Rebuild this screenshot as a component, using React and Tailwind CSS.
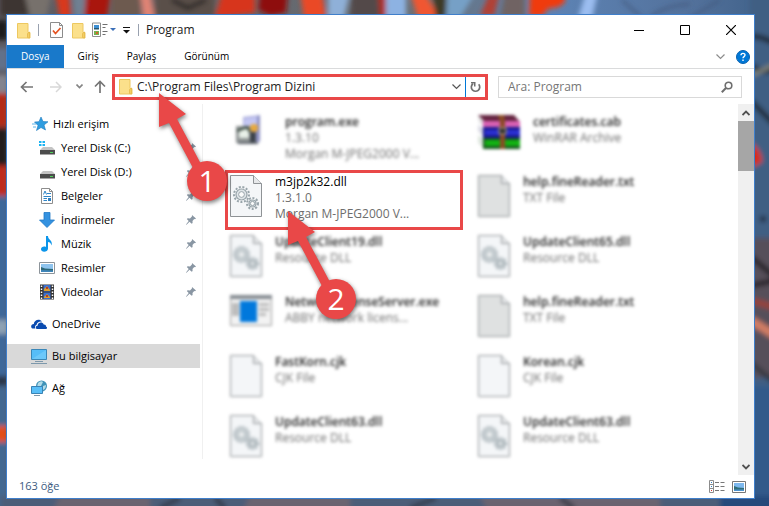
import { useState } from 'react';

const FILES = [
    { name: 'program.exe', info: ['1.3.10', 'Morgan M-JPEG2000 V...'], icon: 'installer' },
    { name: 'certificates.cab', info: ['WinRAR Archive'], icon: 'archive' },
    { name: 'm3jp2k32.dll', info: ['1.3.1.0', 'Morgan M-JPEG2000 V...'], icon: 'dll', marked: true },
    { name: 'help.fineReader.txt', info: ['TXT File'], icon: 'text' },
    { name: 'UpdateClient19.dll', info: ['Resource DLL'], icon: 'dll' },
    { name: 'UpdateClient65.dll', info: ['Resource DLL'], icon: 'dll' },
    { name: 'NetworkLicenseServer.exe', info: ['ABBY network licens...'], icon: 'app' },
    { name: 'help.fineReader.txt', info: ['TXT File'], icon: 'text' },
    { name: 'FastKorn.cjk', info: ['CJK File'], icon: 'blank' },
    { name: 'Korean.cjk', info: ['CJK File'], icon: 'blank' },
    { name: 'UpdateClient63.dll', info: ['Resource DLL'], icon: 'dll' },
    { name: 'UpdateClient63.dll', info: ['Resource DLL'], icon: 'dll' },
];

const QUICK_ACCESS = [
    { name: 'Yerel Disk (C:)', icon: 'driveC' },
    { name: 'Yerel Disk (D:)', icon: 'drive' },
    { name: 'Belgeler', icon: 'documents' },
    { name: 'İndirmeler', icon: 'downloads' },
    { name: 'Müzik', icon: 'music' },
    { name: 'Resimler', icon: 'pictures' },
    { name: 'Videolar', icon: 'videos' },
];

/* ---------- Wallpaper ---------- */

function Wallpaper() {
    return (
        <svg className="absolute inset-0 h-full w-full" viewBox="0 0 769 506" preserveAspectRatio="none" aria-hidden="true">
            <defs>
                <filter id="soft" x="-5%" y="-5%" width="110%" height="110%"><feGaussianBlur stdDeviation="2.4" /></filter>
                <linearGradient id="sky" x1="0" y1="0" x2="1" y2="0">
                    <stop offset="0" stopColor="#5c5a60" />
                    <stop offset=".55" stopColor="#6a7076" />
                    <stop offset=".72" stopColor="#5d83b4" />
                    <stop offset=".9" stopColor="#53719b" />
                    <stop offset="1" stopColor="#3f6189" />
                </linearGradient>
            </defs>
            <rect width="769" height="506" fill="url(#sky)" />
            <g filter="url(#soft)">
                {/* top edge */}
                <path d="M0-8h24l6 24H0z" fill="#3c3431" />
                <path d="M24-8h28l-6 26H30z" fill="#77716c" />
                <path d="M55-8h14l2 26H60z" fill="#d9391f" />
                <path d="M72-8h14v26H74z" fill="#6f8093" />
                <path d="M86-8h25l-4 26H84z" fill="#a91408" />
                <path d="M112-8h28v26h-28z" fill="#6d5a50" />
                <path d="M140-8h10l5 26h-12z" fill="#e08374" />
                <path d="M155-8h60v26h-60z" fill="#5a504a" />
                <path d="M172 0l16 8 18-8" stroke="#262422" strokeWidth="4" fill="none" />
                <path d="M222-8h33v21l-40 5z" fill="#d7351b" />
                <path d="M260-8h28l-2 21-16 3-12-6z" fill="#8e1109" />
                <path d="M300-8h22l4 26h-22z" fill="#ea4a28" />
                <path d="M328-8h22l-6 26h-16z" fill="#8fb0d8" />
                <path d="M352-8h26l4 26h-32z" fill="#534a49" />
                <path d="M378-8h8v26h-6z" fill="#ae2a1d" />
                <path d="M386-8h20v26h-20z" fill="#8db2e2" />
                <path d="M410-8h14l16 26h-22z" fill="#f05630" />
                <path d="M432-8h14v26h-10z" fill="#3d3b25" />
                <path d="M448-8h28l-16 26h-14z" fill="#76a0c6" />
                <path d="M490-8l-10 24h14l6-24z" fill="#b14135" />
                <path d="M505-8h20v26h-25z" fill="#706464" />
                <path d="M530-8h35v10q-6 7-16 6l-8 9-12-1z" fill="#f03a0c" />
                <path d="M586-8l-8 26h14l6-26z" fill="#9bbdf0" />
                <path d="M622 0l20 18M650 18q12-12 40-14M720 0l-30 18" stroke="#3f5478" strokeWidth="2" fill="none" />

                {/* left edge */}
                <path d="M-8 20H8v20H-8z" fill="#1d1c1e" />
                <path d="M-8 48H8v22H-8z" fill="#62718a" />
                <path d="M-8 75H8v18H-8z" fill="#83848f" />
                <path d="M-8 93H8v34H-8z" fill="#b42b18" />
                <path d="M-8 128H8v38H-8z" fill="#231e1e" />
                <path d="M-8 166H8v30H-8z" fill="#bf2c1c" />
                <path d="M-8 196H8v180H-8z" fill="#3d679a" />
                <path d="M-8 320H8v14H-8z" fill="#8ea2b4" />
                <path d="M-8 376H8v10H-8z" fill="#2a3646" />
                <path d="M-8 386H8v130H-8z" fill="#426791" />
                <path d="M-8 426H8v16H-8z" fill="#e34d19" />

                {/* right edge */}
                <path d="M750-8h30v524h-30z" fill="#3f5f83" />
                <path d="M750 36q12 0 26 8M750 64q12 12 26 4M750 100l26 26" stroke="#1c232c" strokeWidth="5" fill="none" />
                <path d="M750 76l26-12" stroke="#84867a" strokeWidth="4" />
                <path d="M750 142q12 8 12 20l-12 6z" fill="#d92c12" />
                <circle cx="763" cy="219" r="3" fill="#161e2e" />
                <path d="M750 238h30v140h-30z" fill="#574f5a" />
                <path d="M750 256l26 22M750 286l26-6" stroke="#241f23" strokeWidth="5" />
                <path d="M750 300l26 8" stroke="#9b4038" strokeWidth="6" />
                <path d="M750 320l26 16" stroke="#d57f65" strokeWidth="8" />
                <path d="M750 362l26 22" stroke="#2a3038" strokeWidth="4" />
                <path d="M750 386h30v130h-30z" fill="#315a8a" />

                {/* bottom edge */}
                <path d="M0 496h769v20H0z" fill="#4b5d78" />
                <path d="M60 496h90v20H50zM250 496h100v20H240zM480 496h180v20H490z" fill="#6b6370" />
                <path d="M160 508l20-10M215 498l10 10M410 508l26-10M560 498l14 10" stroke="#2d323d" strokeWidth="4" />
                <path d="M720 496h60v20h-60z" fill="#28487a" />
            </g>
        </svg>
    );
}

/* ---------- Icons ---------- */

function FolderIcon() {
    return (
        <svg className="shrink-0" width="14" height="17" viewBox="0 0 14 17" aria-hidden="true">
            <path d="M.5 1.5h10.5v9h2v5.5H.5z" fill="#fbe08b" stroke="#edc860" />
            <path d="M10.5 15.5v-4l2-1.5v6z" fill="#f3ce65" stroke="#e5b94a" strokeWidth=".8" />
        </svg>
    );
}

function CheckPageIcon() {
    return (
        <svg width="13" height="16" viewBox="0 0 13 16" aria-hidden="true">
            <path d="M.5.5h9l3 3v12H.5z" fill="#fdfdfd" stroke="#8b8b8b" />
            <path d="M9.5.5v3h3" fill="none" stroke="#8b8b8b" />
            <path d="M3 8.5l2.500 3 5-5.500" fill="none" stroke="#e4511f" strokeWidth="1.7" />
        </svg>
    );
}

function PropertiesIcon() {
    return (
        <svg width="24" height="16" viewBox="0 0 24 16" aria-hidden="true">
            <path d="M.5 1h8v13.5h-8z" fill="#fff" stroke="#8f8f8f" />
            <path d="M2 3h5v3.5H2z" fill="#3d8fd4" />
            <path d="M2 6h5v1.5H2z" fill="#27566f" />
            <path d="M2 9h5v4H2z" fill="#73b04f" />
            <path d="M4 10h2v2H4z" fill="#d6622a" />
            <path d="M10.500 2.500h5M10.500 5.500h3M10.500 9.500h5M10.500 12.500h3" stroke="#6f6f6f" />
            <path d="M18 6h6l-3 3z" fill="#3b6fb8" />
        </svg>
    );
}

function Gear({ cx, cy, r }) {
    return (
        <g fill="none" stroke="#98a4aa">
            <circle cx={cx} cy={cy} r={r} strokeWidth="2" strokeDasharray="2 1.6" />
            <circle cx={cx} cy={cy} r={r - 2} fill="#dfe5e8" strokeWidth="1.2" />
            <circle cx={cx} cy={cy} r={r / 2.6} fill="#fafbfb" strokeWidth="1" />
        </g>
    );
}

function FileIcon({ type }) {
    if (type === 'installer') {
        return (
            <svg className="shrink-0" width="42" height="42" viewBox="0 0 42 42" aria-hidden="true">
                <path d="M13 2l17-2v26l-17 2z" fill="#a9acdc" />
                <path d="M14 4l13-2v10l-13 1z" fill="#c4c7f4" />
                <path d="M27 1l3-1v26l-3 2z" fill="#8c90c4" />
                <path d="M6 11h15v17H6z" fill="#8f9494" />
                <path d="M9 14h10v9H9z" fill="#e9f1e9" />
                <path d="M7 16l10-4 3 5" fill="none" stroke="#304238" strokeWidth="2" />
                <circle cx="24" cy="13" r="4" fill="#e9a93c" />
                <path d="M20 17h6v11h-6z" fill="#3a4048" />
                <path d="M8 28h20" stroke="#5a6068" strokeWidth="2" />
            </svg>
        );
    }
    if (type === 'archive') {
        return (
            <svg className="shrink-0" width="42" height="42" viewBox="0 0 42 42" aria-hidden="true">
                <path d="M0 0l36 0 6 7H6z" fill="#64233f" />
                <path d="M0 0l6 6v6l-5-5z" fill="#ddd" />
                <path d="M5 6h37v6H5z" fill="#db61b4" />
                <path d="M0 10l5 3v8l-5-5z" fill="#d9d9e4" />
                <path d="M5 12h37v11H5z" fill="#18188f" />
                <path d="M7 15h35v5H7z" fill="#2b30d4" />
                <path d="M0 20l5 3v10l-5-5z" fill="#dfe7df" />
                <path d="M5 23h37v11H5z" fill="#14561c" />
                <path d="M7 25h35v6H7z" fill="#12b412" />
                <path d="M20 0h6l1 7v27h-5V7z" fill="#8a4a24" />
                <path d="M21 13h7v6h-7z" fill="#2b2b2b" stroke="#c8b890" />
            </svg>
        );
    }
    if (type === 'app') {
        return (
            <svg className="shrink-0" width="42" height="42" viewBox="0 0 42 42" aria-hidden="true">
                <path d="M.5.5h41v30H.5z" fill="#f3f3f3" stroke="#9a9a9a" />
                <path d="M0 0h42v4H0z" fill="#848a90" />
                <path d="M2 8h7v13H2zM29 8h10v3H29zM29 13h10v3H29zM29 18h7v3h-7z" fill="#bcbcbc" />
                <path d="M10 6h17v21H10z" fill="#0078dc" />
            </svg>
        );
    }
    const fill = type === 'text' ? '#dfe1e1' : '#f4f6f8';
    return (
        <svg className="shrink-0" width="32" height="42" viewBox="0 0 32 42" aria-hidden="true">
            <path d="M.5.5h23l8 8v33H.5z" fill={fill} stroke="#8f9396" />
            <path d="M23.5.5v8h8" fill="#e6e8ea" stroke="#8f9396" />
            {type === 'dll' && (
                <>
                    <Gear cx={11.5} cy={19.5} r={7.5} />
                    <Gear cx={22.5} cy={28.5} r={5.5} />
                </>
            )}
        </svg>
    );
}

function Drive() {
    return (
        <>
            <path d="M4 7h9l3 3H1z" fill="#c4c4c4" />
            <path d="M1 10h15v4.5H1z" fill="#4c4c4c" />
            <path d="M11 12h3v1h-3z" fill="#4ed05a" />
        </>
    );
}

const SIDE_ICONS = {
    star: (
        <>
            <path d="M9 1l2 4.500 5 .3-4 3.200 1.500 5L9 11.500 4.500 14.500 6 9.500 2.500 6l4.500-.3z" fill="#2f9de0" stroke="#1d78bd" strokeWidth=".6" />
            <path d="M0 8h4M1 11h3" stroke="#5cb4ea" />
        </>
    ),
    driveC: (
        <>
            <path d="M0 1h2.500v2H0zM3.500 1H6v2H3.500zM0 4h2.500v2H0zM3.500 4H6v2H3.500z" fill="#1cb4f2" />
            <Drive />
        </>
    ),
    drive: <Drive />,
    documents: (
        <>
            <path d="M2.500.5h8l3 3v12h-11z" fill="#fff" stroke="#8d8d8d" />
            <path d="M10.500.5v3h3" fill="none" stroke="#8d8d8d" />
            <path d="M4.500 6.500L6 3l1.500 3.500M8 5.500h4M4.500 8.500h7.500M4.500 10.500h3.500M4.500 12.500h3.500" fill="none" stroke="#2f86c8" />
            <path d="M9 10h3v3H9z" fill="#2f7fc0" />
        </>
    ),
    downloads: <path d="M5 .5h6V8h4.500L8 15.500.5 8H5z" fill="#3492e0" stroke="#1f78c6" strokeWidth=".8" />,
    music: <path d="M7 0h2c0 4 5 4 3.500 9.500C12 7 10.500 6 9 6v6.500C9 16.500 2 16.800 2 13.300 2 10.800 5 10 7 11z" fill="#0b95ea" />,
    pictures: (
        <>
            <path d="M.5 2.500h15v11H.5z" fill="#fff" stroke="#8d949a" />
            <path d="M2 4h12v8H2z" fill="#8fc4ee" />
            <path d="M2 7l4 1.500 8 .5v3H2z" fill="#2d6878" />
            <path d="M2 10l12 .5V12H2z" fill="#3f86ba" />
        </>
    ),
    videos: (
        <>
            <path d="M1 .5h14v15H1z" fill="#333" />
            <path d="M4.500 1h7v6.500h-7zM4.500 8.500h7V15h-7z" fill="#3a6ed0" />
            <path d="M5 5l3-3 3 4v1H5zM5 13l3-3 3 3v1H5z" fill="#dda02b" />
            <path d="M7 3h2v2H7zM7 11h2v2H7z" fill="#b63c24" />
            <path d="M2.500 1.500v14M13.500 1.500v14" stroke="#fff" strokeWidth="1.5" strokeDasharray="1.5 1.5" />
        </>
    ),
    onedrive: (
        <>
            <path d="M1.500 12.500C-.8 11.500 0 8 2.800 8 3 4.500 8 2 11 5.500 8 5 6 6.500 5.500 9 4 9.500 3.500 11.500 4.500 12.500z" fill="#0a4bb0" />
            <path d="M6.500 13C4 13 4.300 9.700 6.500 9.700 7 6 11.500 5.500 12.700 8.500 15 8.500 15 10 15 10.500 16.800 11.300 16 13 15 13z" fill="#0a4bb0" />
        </>
    ),
    computer: (
        <>
            <path d="M.5 1.500h15v10H.5z" fill="#56bdf8" stroke="#3a87b8" />
            <path d="M1 11L15 2v9z" fill="#7ccffc" opacity=".6" />
            <path d="M4 13.500h8M0 15.500h16" stroke="#7d98ab" />
        </>
    ),
    network: (
        <>
            <circle cx="10.5" cy="6" r="5.5" fill="#3f93b8" />
            <path d="M7 3q3-3 5-1l-2 4-4 1zM12 6l3-1q0 4-3 5z" fill="#b4dce8" />
            <path d="M.5 6.500h11v7H.5z" fill="#59bff8" stroke="#3a83b4" />
            <path d="M3 15.500h6" stroke="#7d98ab" />
        </>
    ),
};

function SideIcon({ name }) {
    return (
        <svg className="shrink-0" width="16" height="16" viewBox="0 0 16 16" aria-hidden="true">
            {SIDE_ICONS[name]}
        </svg>
    );
}

function PinIcon() {
    return (
        <svg className="ml-auto shrink-0" width="10" height="10" viewBox="0 0 10 10" aria-hidden="true">
            <path d="M6 0l4 3.500-1 .8-.8-.2L6.500 6l.1 2-.9.800L3.500 6.800.500 9.700 0 9.500l2.700-3.400L.8 4l.9-.8 2.300.2 1.900-1.900z" fill="#8996a3" />
        </svg>
    );
}

/* ---------- Callouts ---------- */

function Callout({ number, className }) {
    return (
        <svg className={`pointer-events-none absolute z-20 overflow-visible ${className}`} width="70" height="114" viewBox="0 0 70 114">
            <g style={{ filter: 'drop-shadow(1px 2px 2px rgb(0 0 0 / 0.5))' }}>
                <path d="M0 0l27 21-9 5 32 60-8 4-32-60-10 4z" fill="#e94848" />
                <circle cx="48" cy="88" r="20" fill="#e94848" />
            </g>
            <text x="48" y="99" textAnchor="middle" fontSize="30" fill="#fff">{number}</text>
        </svg>
    );
}

/* ---------- Window parts ---------- */

function TitleBar() {
    return (
        <header className="flex h-[30px] shrink-0 items-center pl-[10px]">
            <FolderIcon />
            <span className="ml-[7px] h-3 w-px bg-gray-400" />
            <button type="button" aria-label="Özellikler" className="ml-[11px]"><CheckPageIcon /></button>
            <button type="button" aria-label="Yeni klasör" className="ml-[9px]"><FolderIcon /></button>
            <button type="button" aria-label="Görünüm seçenekleri" className="ml-[6px]"><PropertiesIcon /></button>
            <button type="button" aria-label="Araç çubuğunu özelleştir" className="ml-[7px]">
                <svg width="7" height="8" viewBox="0 0 7 8" aria-hidden="true">
                    <path d="M0 1.500h7" stroke="#111" />
                    <path d="M0 4h7L3.500 7.500z" fill="#111" />
                </svg>
            </button>
            <span className="ml-[8px] h-3 w-px bg-gray-400" />
            <h1 className="ml-[7px] text-[12px] text-[#222]">Program</h1>
            <div className="ml-auto flex h-full">
                <button type="button" aria-label="Simge durumuna küçült" className="flex w-[46px] items-center justify-center">
                    <svg width="10" height="10" viewBox="0 0 10 10"><path d="M0 5.500h10" stroke="#000" /></svg>
                </button>
                <button type="button" aria-label="Ekranı kapla" className="flex w-[46px] items-center justify-center">
                    <svg width="10" height="10" viewBox="0 0 10 10"><path d="M.5.5h9v9h-9z" stroke="#000" fill="none" /></svg>
                </button>
                <button type="button" aria-label="Kapat" className="flex w-[46px] items-center justify-center">
                    <svg width="10" height="10" viewBox="0 0 10 10"><path d="M0 0l10 10M10 0L0 10" stroke="#000" strokeWidth="1.2" /></svg>
                </button>
            </div>
        </header>
    );
}

function Ribbon() {
    return (
        <nav className="flex h-6 shrink-0 items-stretch border-b border-[#dadbdc] text-[10px]">
            <button type="button" className="bg-[#1979ca] px-[14px] text-white">Dosya</button>
            <button type="button" className="px-[14px]">Giriş</button>
            <button type="button" className="px-[14px]">Paylaş</button>
            <button type="button" className="px-[14px]">Görünüm</button>
            <button type="button" aria-label="Şeridi genişlet" className="ml-auto">
                <svg width="9" height="6" viewBox="0 0 9 6"><path d="M.5.5l4 4 4-4" fill="none" stroke="#8c8c8c" strokeWidth="1.2" /></svg>
            </button>
            <button type="button" aria-label="Yardım" className="mr-[4px] ml-[11px]">
                <svg width="14" height="14" viewBox="0 0 14 14">
                    <circle cx="7" cy="7" r="6.5" fill="#0078d7" stroke="#0a62b0" />
                    <path d="M5 5.300c0-2.600 4-2.500 4-.2 0 1.500-2 1.500-2 3.100M7 9.500v1.500" fill="none" stroke="#fff" strokeWidth="1.4" />
                </svg>
            </button>
        </nav>
    );
}

function AddressRow() {
    const [path, setPath] = useState('C:\\Program Files\\Program Dizini');
    const [query, setQuery] = useState('');

    return (
        <div className="flex h-[35px] shrink-0 items-center pr-[12px] pl-[13px]">
            <button type="button" aria-label="Geri">
                <svg width="13" height="12" viewBox="0 0 13 12"><path d="M13 6H1.500M6.500 1l-5 5 5 5" fill="none" stroke="#757575" strokeWidth="1.7" /></svg>
            </button>
            <button type="button" aria-label="İleri" className="ml-[17px]">
                <svg width="12" height="12" viewBox="0 0 12 12"><path d="M0 6h10.500M6 1l5 5-5 5" fill="none" stroke="#d8d8d8" strokeWidth="1.5" /></svg>
            </button>
            <button type="button" aria-label="Son konumlar" className="ml-[14px]">
                <svg width="7" height="5" viewBox="0 0 7 5"><path d="M.5.5l3 3 3-3" fill="none" stroke="#858585" strokeWidth="1.6" /></svg>
            </button>
            <button type="button" aria-label="Yukarı" className="mr-[6px] ml-[11px]">
                <svg width="12" height="13" viewBox="0 0 12 13"><path d="M6 13V1.500M1 6.500l5-5 5 5" fill="none" stroke="#757575" strokeWidth="1.7" /></svg>
            </button>

            <div className="relative flex h-[26px] min-w-0 flex-1 items-center border-[3px] border-[#e94848] pl-[4px]">
                <FolderIcon />
                <input
                    aria-label="Adres"
                    value={path}
                    onChange={e => setPath(e.target.value)}
                    className="ml-[4px] min-w-0 flex-1 text-[12px] text-[#222] outline-none"
                />
                <button type="button" aria-label="Önceki konumlar" className="mr-[4px]">
                    <svg width="9" height="6" viewBox="0 0 9 6"><path d="M.5.5l4 4 4-4" fill="none" stroke="#555" strokeWidth="1.2" /></svg>
                </button>
                <button type="button" aria-label="Yenile" className="flex h-full w-5 items-center justify-center border-l border-[#0078d7]">
                    <svg width="11" height="12" viewBox="0 0 11 12">
                        <path d="M3 2.700A4.200 4.200 0 1 0 8.700 3.300" fill="none" stroke="#707070" strokeWidth="1.7" />
                        <path d="M1 1h4.500v4.500H4V2.500H1z" fill="#707070" />
                    </svg>
                </button>
                <Callout number="1" className="top-[16px] left-[44px]" />
            </div>

            <div className="ml-[10px] flex h-[22px] w-[244px] items-center border border-[#d9d9d9] pr-[8px] pl-[9px]">
                <input
                    aria-label="Ara"
                    value={query}
                    onChange={e => setQuery(e.target.value)}
                    placeholder="Ara: Program"
                    className="min-w-0 flex-1 text-[12px] outline-none placeholder:text-[#767676]"
                />
                <button type="button" aria-label="Aramayı başlat">
                    <svg width="12" height="12" viewBox="0 0 12 12">
                        <circle cx="7.5" cy="4.5" r="3.3" fill="none" stroke="#6e6e6e" strokeWidth="1.6" />
                        <path d="M5.200 6.800L.8 11.200" stroke="#6e6e6e" strokeWidth="2" />
                    </svg>
                </button>
            </div>
        </div>
    );
}

function Sidebar() {
    return (
        <nav className="w-[195px] shrink-0 pt-2 text-[11px]">
            <a href="#quick" className="flex h-6 items-center gap-[5px] pl-[25px]">
                <SideIcon name="star" />
                Hızlı erişim
            </a>
            {QUICK_ACCESS.map(item => (
                <a key={item.name} href="#quick" className="flex h-6 items-center gap-[6px] pr-[6px] pl-[32px]">
                    <SideIcon name={item.icon} />
                    {item.name}
                    <PinIcon />
                </a>
            ))}
            <a href="#onedrive" className="mt-2 flex h-6 items-center gap-[5px] pl-[24px]">
                <SideIcon name="onedrive" />
                OneDrive
            </a>
            <a href="#computer" className="mt-2 mr-[2px] flex h-6 items-center gap-[5px] bg-[#d9d9d9] pl-[24px]">
                <SideIcon name="computer" />
                Bu bilgisayar
            </a>
            <a href="#network" className="mt-2 flex h-6 items-center gap-[5px] pl-[24px]">
                <SideIcon name="network" />
                Ağ
            </a>
        </nav>
    );
}

function FileItem({ file }) {
    return (
        <li className="relative">
            <div className={`flex h-[60px] gap-[13px] border-[3px] px-[2px] ${file.marked ? 'border-[#e94848]' : 'border-transparent blur-[1px]'}`}>
                <div className={`mt-[2px] ${file.marked ? '' : 'blur-[1px]'}`}>
                    <FileIcon type={file.icon} />
                </div>
                <div className={`min-w-0 text-[12px] whitespace-nowrap ${file.marked ? '' : 'blur-[1px]'}`}>
                    <p className={`leading-[17px] ${file.marked ? '' : 'font-semibold text-[#222]'}`}>{file.name}</p>
                    {file.info.map(line => (
                        <p key={line} className="leading-4 text-[#6d6d6d]">{line}</p>
                    ))}
                </div>
            </div>
            {file.marked && <Callout number="2" className="top-[41px] left-[63px]" />}
        </li>
    );
}

function ScrollBar() {
    return (
        <div className="flex w-4 shrink-0 flex-col items-center bg-[#f0f0f0]">
            <button type="button" aria-label="Yukarı kaydır" className="flex h-[17px] items-center">
                <svg width="8" height="6" viewBox="0 0 8 6"><path d="M.5 5L4 1.500 7.500 5" fill="none" stroke="#505050" strokeWidth="1.8" /></svg>
            </button>
            <div className="h-[50px] w-full bg-[#a6a6a6]" />
            <button type="button" aria-label="Aşağı kaydır" className="mt-auto flex h-[17px] items-center">
                <svg width="8" height="6" viewBox="0 0 8 6"><path d="M.5 1L4 4.500 7.500 1" fill="none" stroke="#505050" strokeWidth="1.8" /></svg>
            </button>
        </div>
    );
}

function StatusBar() {
    return (
        <footer className="flex h-[23px] shrink-0 items-center pr-[8px] pl-[12px] text-[11px] text-[#3b5a80]">
            <span>163 öğe</span>
            <button type="button" aria-label="Ayrıntılar" className="ml-auto">
                <svg width="16" height="13" viewBox="0 0 16 13">
                    <path d="M.5.5h4v12h-4zM.5 4.500h4M.5 8.500h4" fill="#fff" stroke="#8c8c8c" />
                    <path d="M2 2h1v1H2zM2 6h1v1H2z" fill="#2d7fc4" />
                    <path d="M2 10h1v1H2z" fill="#d03030" />
                    <path d="M6 2.500h4M11.500 2.500h4M6 6.500h4M11.500 6.500h4M6 10.500h4M11.500 10.500h4" stroke="#777" />
                </svg>
            </button>
            <button type="button" aria-label="Büyük simgeler" className="ml-[7px]">
                <svg width="14" height="12" viewBox="0 0 14 12">
                    <path d="M.5.5h13v11H.5z" fill="#fff" stroke="#777" />
                    <path d="M2 2h10v8H2z" fill="#7db8ee" />
                    <path d="M2 5l4 1.500L12 7v3H2z" fill="#2f6d78" />
                    <path d="M2 8.500h10V10H2z" fill="#4c93cf" />
                </svg>
            </button>
        </footer>
    );
}

export default function App() {
    return (
        <div className="relative flex min-h-screen pt-[14px] pr-[14px] pb-[7px] pl-[6px] font-['Open_Sans','Noto_Sans',sans-serif] text-black">
            <Wallpaper />
            <main className="relative flex min-w-0 flex-1 flex-col border border-[#3f7fcb] bg-white">
                <TitleBar />
                <Ribbon />
                <AddressRow />
                <div className="flex min-h-0 flex-1">
                    <Sidebar />
                    <div className="mb-4 w-px bg-[#f0f0f0]" />
                    <ul className="grid min-w-0 flex-1 grid-cols-[repeat(auto-fill,238px)] content-start gap-x-[10px] pt-[6px] pl-[22px]">
                        {FILES.map((file, i) => (
                            <FileItem key={i} file={file} />
                        ))}
                    </ul>
                    <ScrollBar />
                </div>
                <StatusBar />
            </main>
        </div>
    );
}
